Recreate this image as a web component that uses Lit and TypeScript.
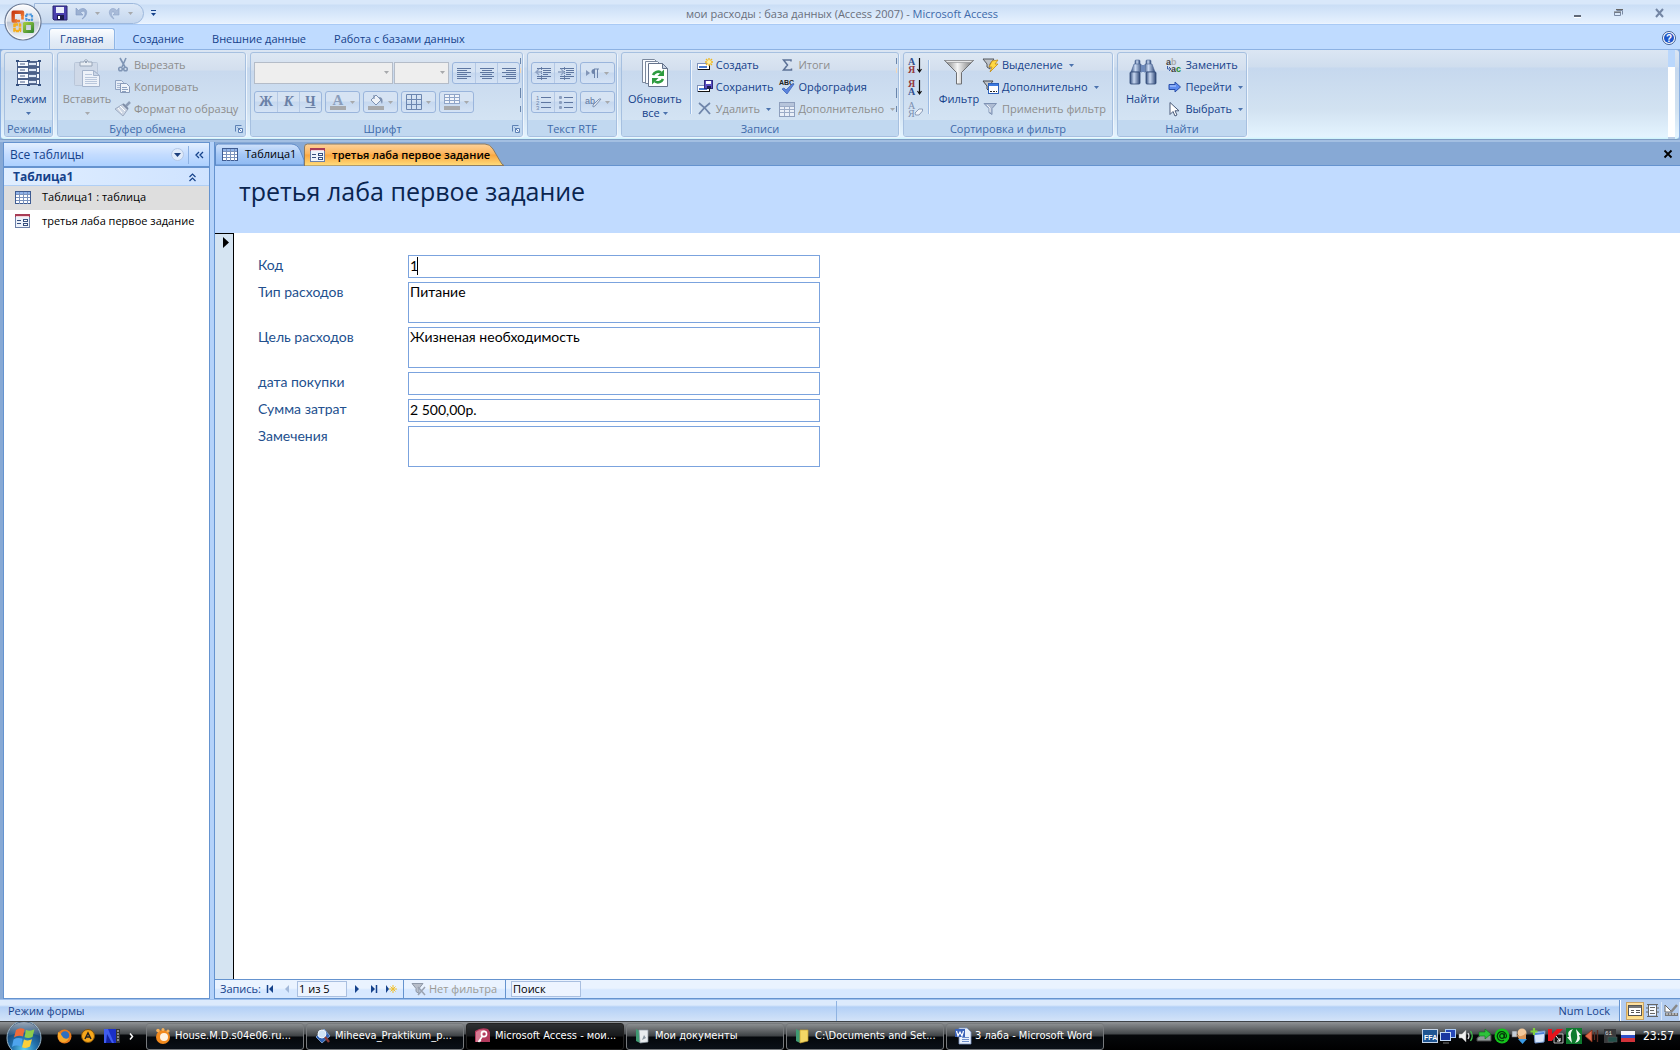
import { LitElement, html, svg, css, nothing } from "lit";
import { customElement, property, state } from "lit/decorators.js";
import { classMap } from "lit/directives/class-map.js";

type Art = ReturnType<typeof svg>;

/** Wraps a drawing in an inline SVG of the given size. */
const icon = (w: number, h: number, art: Art) =>
  html`<svg class="ic" width=${w} height=${h} viewBox="0 0 ${w} ${h}" aria-hidden="true">${art}</svg>`;

const arrow = (color = "#4b72ad") =>
  icon(5, 3, svg`<path d="M0 0h5L2.5 3z" fill=${color} />`);

const GREY = "#a7a9ac";
const MUTE = "#7f95b5";

const lines = (rows: number[][], color: string) =>
  rows.map(([x, y, w]) => svg`<rect x=${x} y=${y} width=${w} height="1" fill=${color} />`);

const art = {
  save: svg`<path d="M0 0h14v14H1L0 13z" fill="#4a3fae"/><path d="M0 0h14v14H1L0 13z" fill="none" stroke="#27256e"/><rect x="3" y="1" width="8" height="6" fill="#e9edfb"/><rect x="4" y="9" width="7" height="5" fill="#1b1a4b"/><rect x="5" y="10" width="2" height="3" fill="#fff"/>`,
  undo: svg`<path d="M1 1v7h7L5.500 5.500C9 2.500 11 5 9.500 9L7 12c5-2 7-10 1-10.500C6 1.500 4.500 2.500 3.500 3.500z" fill="#9cb1d2" stroke="#8199c2" stroke-width=".6"/>`,
  redo: svg`<path d="M11 1v7H5l2.200-2.200C4 3.500 2 6 4.500 9.500L6 12C0 9 0 1.500 5 1.500c1.500 0 3 1 3.800 2z" fill="#a9bbd8" stroke="#8ea4c9" stroke-width=".6"/>`,
  view: svg`${[3.5, 9.5, 15.5, 21.5].map((y) => svg`<rect x="1.500" y=${y - 1} width="22" height="5" fill="#f7faff" stroke="#4a5f88"/><rect x="4" y=${y + 1} width="5" height="1" fill="#4a5f88"/><rect x="12.500" y=${y} width="8" height="3" fill="#dde7f6" stroke="#4a5f88" stroke-width=".9"/>`)}<path d="M1.500 1v26M23.500 1v26M1 2.500h22M1 25.500h22" stroke="#4a5f88"/>${[[0, 1], [11, 1], [22, 1], [0, 25], [11, 25], [22, 25]].map(([x, y]) => svg`<rect x=${x} y=${y} width="3" height="2" fill="#35507f"/>`)}`,
  paste: svg`<rect x=".5" y="3.500" width="23" height="23" rx="1" fill="#cfd9e8" stroke="#b9c6d9"/><path d="M6 7V3h4c0-3 4-3 4 0h4v4z" fill="#e8edf3" stroke="#98a5b8"/><rect x="11" y="2" width="2" height="2" fill="#98a5b8"/><path d="M8.500 11.500h11l6 5v11h-17z" fill="#edf2f9" stroke="#a4b4cc"/><path d="M19.500 11.500v5h6z" fill="#cbd7e8" stroke="#a4b4cc"/>${lines([[11, 15, 7], [11, 18, 12], [11, 20, 12], [11, 22, 12], [11, 24, 12]], "#b9c7dc")}`,
  cut: svg`<path d="M2 0l5 9M8 0L4 9" stroke=${MUTE} stroke-width="1.600" fill="none"/><circle cx="2.500" cy="11" r="1.800" fill="none" stroke=${MUTE} stroke-width="1.500"/><circle cx="7.500" cy="11" r="1.800" fill="none" stroke=${MUTE} stroke-width="1.500"/>`,
  copy: svg`<path d="M.5.500h6l2 2v7h-8z" fill="#e6edf7" stroke="#8fa3c2"/>${lines([[2, 3, 4], [2, 5, 4], [2, 7, 4]], "#a9b9d2")}<path d="M5.500 3.500h6l3 3v6h-9z" fill="#eef3fa" stroke="#8799b8"/>${lines([[7, 7, 5], [7, 9, 6], [7, 11, 4]], "#8da1c0")}`,
  brush: svg`<path d="M15 0l-4 4" stroke="#8d9db7" stroke-width="2.500"/><path d="M8 2l5 5-5 7-8-7z" fill="#cdd6e4" stroke="#9dabc2"/><path d="M8 2l5 5" stroke="#7d8ca5" stroke-width="1.800"/><path d="M3 6l4 5M5 4l5 5" stroke="#fff"/>`,
  launcher: svg`<path d="M.5 6.500v-6h6" stroke="#5d81b5" fill="none"/><path d="M3.500 3.500h4v4h-4z" fill="#eef5ff" stroke="#5d81b5"/><path d="M2.500 2.500l4 4" stroke="#5d81b5"/>`,
  alignL: svg`${lines([[0, 0, 14], [0, 2, 10], [0, 4, 14], [0, 6, 10], [0, 8, 14], [0, 10, 10]], "#5e76a0")}`,
  alignC: svg`${lines([[0, 0, 14], [2, 2, 10], [0, 4, 14], [2, 6, 10], [0, 8, 14], [2, 10, 10]], "#5e76a0")}`,
  alignR: svg`${lines([[0, 0, 14], [4, 2, 10], [0, 4, 14], [4, 6, 10], [0, 8, 14], [4, 10, 10]], "#5e76a0")}`,
  fontColor: svg`<text x="8" y="11" text-anchor="middle" font-family="Liberation Serif, serif" font-weight="bold" font-size="15" fill="#8a9dbb">А</text><rect y="12" width="16" height="4" fill=${GREY}/>`,
  bucket: svg`<path d="M3 6l5-5 5 5-5 5z" fill="#eef2f8" stroke="#7d91b1"/><path d="M6 5V1" stroke="#7d91b1" stroke-width="1.200"/><path d="M11 3c4 0 4 4 3 7l-2-4z" fill="#7d91b1"/><rect y="12" width="16" height="4" fill=${GREY}/>`,
  grid: svg`<path d="M.5.500h15v15H.5zM5.500.500v15M10.500.500v15M.5 5.500h15M.5 10.500h15" fill="none" stroke="#6c86b0"/>`,
  altRow: svg`<rect x=".5" y=".5" width="15" height="9" fill="#f1f5fb" stroke="#8fa5c8"/><path d="M.5 3.500h15M.5 6.500h15M5.500.500v9M10.500.500v9" stroke="#8fa5c8"/><rect y="12" width="16" height="4" fill=${GREY}/>`,
  outdent: svg`${lines([[2, 1, 14], [8, 3, 8], [8, 5, 8], [8, 7, 5], [2, 9, 14], [2, 11, 10]], "#5e76a0")}<path d="M7 5H1l3-3M1 5l3 3" fill="none" stroke="#8fa3c4" stroke-width="1.400"/><path d="M6.500 0v13" stroke="#7085ab" stroke-dasharray="1 1"/>`,
  indent: svg`${lines([[2, 1, 14], [8, 3, 8], [8, 5, 8], [8, 7, 5], [2, 9, 14], [2, 11, 10]], "#5e76a0")}<path d="M0 5h6L3 2M6 5L3 8" fill="none" stroke="#8fa3c4" stroke-width="1.400"/><path d="M6.500 0v13" stroke="#7085ab" stroke-dasharray="1 1"/>`,
  rtl: svg`<path d="M0 2l4 3-4 3z" fill="#8296b8"/><path d="M8.500 1v9M11.500 1v9M13 1H8" stroke="#6d84ab" fill="none"/><path d="M8 1a2.500 2.500 0 0 0 0 5z" fill="#6d84ab"/>`,
  numbered: svg`${lines([[5, 2, 10], [5, 7, 10], [5, 12, 10]], "#5e76a0")}${[1, 2, 3].map((n) => svg`<text x="0" y=${n * 5 - 0.5} font-family="Liberation Sans, sans-serif" font-size="6" fill="#6d84ab">${n}</text>`)}`,
  bulleted: svg`${lines([[5, 2, 9], [5, 7, 9], [5, 12, 9]], "#5e76a0")}${[1, 6, 11].map((y) => svg`<rect x="0" y=${y} width="3" height="3" rx="1" fill="#8a9ebf"/>`)}`,
  highlight: svg`<text x="0" y="8" font-family="Liberation Sans, sans-serif" font-size="9" fill="#5e76a0">ab</text><path d="M16 3l-6 7-2 1 0-2 6-6z" fill="#dfe6f0" stroke="#8094b5"/>`,
  refresh: svg`<path d="M.5.500h12l3 3v20h-15z" fill="#fafcff" stroke="#7b889c"/><path d="M3.500 2.500h12l3 3v19h-15z" fill="#fafcff" stroke="#7b889c"/><path d="M6.500 4.500h14l5 5v18h-19z" fill="#fff" stroke="#66748c"/><path d="M20.500 4.500v5h5z" fill="#c7d3e5" stroke="#66748c"/><path d="M11 16a5.500 5.500 0 0 1 8-2.500" fill="none" stroke="#2e9b3f" stroke-width="2.600"/><path d="M22 10.500v6.500h-6.500z" fill="#2e9b3f"/><path d="M21 20a5.500 5.500 0 0 1-8 2.500" fill="none" stroke="#2e9b3f" stroke-width="2.600"/><path d="M10 25.500v-6.500h6.500z" fill="#2e9b3f"/>`,
  create: svg`<rect x=".5" y="5.500" width="12" height="6" fill="#fff" stroke="#7f93bb"/><rect x="2" y="8" width="8" height="2" fill="#4a7bd0"/><path d="M1 11.500h12M12.500 7v5" stroke="#111"/><path d="M12 0v8M8 4h8M9 1l6 6M15 1l-6 6" stroke="#f0b81e" stroke-width="1.300"/><circle cx="12" cy="4" r="2" fill="#fff3a8"/>`,
  saveRec: svg`<rect x=".5" y="5.500" width="12" height="6" fill="#fff" stroke="#7f93bb"/><rect x="2" y="8" width="8" height="2" fill="#4a7bd0"/><path d="M1 11.500h12M12.500 7v5" stroke="#111"/><rect x="7.500" y=".5" width="8" height="8" fill="#5a4fc0" stroke="#2f2a80"/><rect x="9" y="1" width="5" height="3" fill="#fff"/><rect x="10" y="6" width="4" height="3" fill="#1d1b50"/>`,
  remove: svg`<path d="M1 1c4 3 8 7 11 11M12 1C8 4 4 8 1 12" fill="none" stroke="#7086ab" stroke-width="1.800"/>`,
  sigma: svg`<path d="M9 2.500V1H1.500L5.500 6l-4 5H9.500V9.500" fill="none" stroke="#5c7196" stroke-width="1.500"/>`,
  spell: svg`<text x="0" y="5" font-family="Liberation Sans, sans-serif" font-weight="bold" font-size="7" fill="#222">ABC</text><path d="M3 9l2-1 2 2 6-6 2 0-7 10z" fill="#5b83dc" stroke="#3f66bd" stroke-width=".8"/>`,
  sheet: svg`<rect x=".5" y=".5" width="15" height="14" fill="#e9eff8" stroke="#8e9fbd"/><rect x="1" y="1" width="14" height="3" fill="#b7c5db"/><path d="M1 4.500h14M1 7.500h14M1 10.500h14M5.500 4v10M10.500 4v10" stroke="#9cacc7"/>`,
  sortAsc: svg`<text x="0" y="7" font-family="Liberation Serif, serif" font-weight="bold" font-size="10" fill="#31508f">А</text><text x="0" y="15" font-family="Liberation Serif, serif" font-weight="bold" font-size="10" fill="#93393e">Я</text><path d="M11.500 0v13M9.500 11l2 3 2-3" fill="none" stroke="#111" stroke-width="1.200"/>`,
  sortDesc: svg`<text x="0" y="7" font-family="Liberation Serif, serif" font-weight="bold" font-size="10" fill="#93393e">Я</text><text x="0" y="15" font-family="Liberation Serif, serif" font-weight="bold" font-size="10" fill="#31508f">А</text><path d="M11.500 0v13M9.500 11l2 3 2-3" fill="none" stroke="#111" stroke-width="1.200"/>`,
  sortClear: svg`<text x="0" y="7" font-family="Liberation Serif, serif" font-size="10" fill="#7c8fb0">А</text><text x="0" y="15" font-family="Liberation Serif, serif" font-size="10" fill="#7c8fb0">Я</text><path d="M7 11l4-4h3.500v2L11 13H7.500z" fill="#eef2f8" stroke="#8b9cb8"/>`,
  funnelBig: svg`<defs><linearGradient id="fb"><stop offset="0" stop-color="#777"/><stop offset=".45" stop-color="#f5f5f5"/><stop offset="1" stop-color="#6f6f6f"/></linearGradient></defs><path d="M.5 1.500h29l-12 12v11.500h-5V13.500z" fill="url(#fb)" stroke="#6e7073"/><path d="M1 1.500h28l-2 2H3z" fill="#e8e8e8" stroke="#8a8c8f" stroke-width=".6"/>`,
  selection: svg`<path d="M0 1h11L7 6v5L4 9V6z" fill="#bfc3c8" stroke="#55595f"/><path d="M9 3l6-1-3 4h3l-8 8 2-5H6z" fill="#ffd843" stroke="#c38a12" stroke-width=".8"/>`,
  advanced: svg`<path d="M0 1h10L6 6v5L4 9V6z" fill="#bfc3c8" stroke="#44484e"/><rect x="5.500" y="3.500" width="10" height="10" fill="#fff" stroke="#2b5fb8"/><rect x="6" y="4" width="9" height="2" fill="#3e7be0"/><path d="M7 11.500h2M10 11.500h2M13 11.500h1" stroke="#222"/>`,
  applyFilter: svg`<path d="M1 1.500h12.500L9 6.500v6L6 10.500v-4z" fill="#aebcd3" stroke="#7e92b3"/><path d="M4 3l3 3v4" stroke="#f3f6fb" fill="none"/>`,
  noFilter: svg`<path d="M0 1.500h11L7 6.500v5L4 9.500v-3z" fill="#b8bec9" stroke="#8e98a8"/><path d="M6 5l7 8M13 5l-7 8" stroke="#9aa2b0" stroke-width="1.500"/>`,
  binoculars: svg`<defs><linearGradient id="bn"><stop offset="0" stop-color="#35507f"/><stop offset=".4" stop-color="#c9d9f2"/><stop offset="1" stop-color="#2d4675"/></linearGradient></defs><rect x="6" y="1" width="5" height="5" rx="1" fill="url(#bn)" stroke="#4b6596" stroke-width=".6"/><rect x="17" y="1" width="5" height="5" rx="1" fill="url(#bn)" stroke="#4b6596" stroke-width=".6"/><path d="M5 5h7l1 8H2z" fill="url(#bn)" stroke="#4b6596" stroke-width=".6"/><path d="M16 5h7l3 8H15z" fill="url(#bn)" stroke="#4b6596" stroke-width=".6"/><rect x="12" y="6" width="4" height="7" fill="#6d89ba"/><rect x="1" y="13" width="10" height="12" rx="1" fill="url(#bn)" stroke="#2d4675" stroke-width=".8"/><rect x="17" y="13" width="10" height="12" rx="1" fill="url(#bn)" stroke="#2d4675" stroke-width=".8"/>`,
  replace: svg`<text x="0" y="7" font-family="Liberation Sans, sans-serif" font-weight="bold" font-size="9" fill="#444">a<tspan fill="#aaa">b</tspan></text><text x="5" y="14" font-family="Liberation Sans, sans-serif" font-weight="bold" font-size="9" fill="#444">a<tspan fill="#1c8a2c">c</tspan></text><path d="M1.500 8v3h3M3 9l2 2-2 2" fill="none" stroke="#3a5ea8"/>`,
  goTo: svg`<path d="M1 3.500h6V1l5.500 5L7 11V8.500H1z" fill="#5e8cf0" stroke="#2a4ea8"/><path d="M2 5h6" stroke="#b8cffb"/>`,
  cursor: svg`<path d="M1 .5v12l3-3 2 4.500 2-1-2-4.200h4z" fill="#fff" stroke="#4a5a78"/>`,
  table: svg`<rect x=".5" y=".5" width="15" height="12" fill="#fff" stroke="#3f5c92"/><rect x="1" y="1" width="14" height="3" fill="#8fb2e8"/><path d="M1 3.500h14M1 6.500h14M1 9.500h14M4.500 1v12M8.500 1v12M12.500 1v12" stroke="#7b93bd"/>`,
  form: svg`<rect x=".5" y=".5" width="14" height="13" fill="#eef3fb" stroke="#6d80a8"/><rect x="0" y="0" width="15" height="3" fill="#a83c56"/><rect x="1" y="2" width="13" height="1" fill="#f6d5dc"/>${lines([[2, 6, 4], [2, 9, 4]], "#38507f")}<rect x="8.500" y="5.500" width="4" height="2" fill="#fff" stroke="#38507f"/><rect x="8.500" y="9.500" width="4" height="2" fill="#fff" stroke="#38507f"/>`,
  viewForm: svg`<rect x=".5" y="1.500" width="13" height="10" fill="#fff" stroke="#555"/><rect x="1" y="2" width="12" height="2" fill="#777"/>${lines([[3, 6, 3], [3, 8, 3], [8, 6, 4], [8, 8, 4]], "#555")}`,
  viewLayout: svg`<path d="M1 .5h11M1 12.500h11M2.500 0v13M10.500 0v13" stroke="#666"/><rect x="3" y="2" width="7" height="9" fill="#f6f9fd"/>${lines([[4, 3, 5], [4, 6, 4], [4, 9, 5]], "#666")}<path d="M0 4h2M0 8h2M11 4h2M11 8h2" stroke="#666"/>`,
  viewDesign: svg`<path d="M1 1v7h7z" fill="#fff" stroke="#666"/><path d="M13 1L7 8" stroke="#888" stroke-width="2.500"/><rect x="1" y="9" width="13" height="3" fill="#777"/><path d="M3 9v2M6 9v2M9 9v2M12 9v2" stroke="#eee"/>`,
};

const officeLogo = html`<svg width="40" height="40" viewBox="0 0 40 40" aria-hidden="true">
  <defs>
    <linearGradient id="ob" x2="0" y2="1"><stop offset="0" stop-color="#fdfdfe" /><stop offset=".48" stop-color="#dbe0e9" /><stop offset=".5" stop-color="#bcc5d4" /><stop offset="1" stop-color="#f4f7fb" /></linearGradient>
    <linearGradient id="o1" x2="1" y2="1"><stop offset="0" stop-color="#c93a12" /><stop offset="1" stop-color="#f28a3c" /></linearGradient>
    <linearGradient id="o2" x2="1" y2="1"><stop offset="0" stop-color="#9ac83c" /><stop offset="1" stop-color="#3b8a34" /></linearGradient>
  </defs>
  <circle cx="20" cy="20" r="18" fill="url(#ob)" stroke="#6d7c96" stroke-width="1.200" />
  <circle cx="20" cy="20" r="16.800" fill="none" stroke="#fff" opacity=".8" />
  <g fill="none" stroke-linejoin="round">
    <path d="M14 19H10.200V10.200H19.500V14" stroke="url(#o1)" stroke-width="3.400" />
    <path d="M19.500 13v4.500M13 19h4" stroke="#f07b2a" stroke-width="2.600" />
    <path d="M23 12.500h6v5.500h-5.500z" stroke="#4a96dc" stroke-width="2.200" stroke-dasharray="2.500 .8" />
    <path d="M11.500 22.500h5.500v6.500h-5.500z" stroke="#f5ae1e" stroke-width="2.600" stroke-dasharray="3.500 .8" />
    <path d="M21.500 21.500h8v8h-8z" stroke="url(#o2)" stroke-width="3.200" />
  </g>
</svg>`;

const winOrb = html`<svg width="36" height="29" viewBox="0 0 36 29" aria-hidden="true">
  <defs>
    <radialGradient id="wo" cx=".5" cy=".85" r=".8"><stop offset="0" stop-color="#5fd0f0" /><stop offset=".45" stop-color="#2372ae" /><stop offset="1" stop-color="#0e2c52" /></radialGradient>
    <linearGradient id="wg" x2="0" y2="1"><stop offset="0" stop-color="#fff" stop-opacity=".6" /><stop offset="1" stop-color="#fff" stop-opacity=".05" /></linearGradient>
  </defs>
  <circle cx="18" cy="16" r="17" fill="url(#wo)" stroke="#9db9cc" />
  <path d="M2 14a16 14 0 0 1 32 0q-16-7-32 0z" fill="url(#wg)" />
  <path d="M10 8q4-3 8.500-.8L17 14.500q-5-2-9 1z" fill="#ee6a3a" />
  <path d="M20 7.800q4 2 8.500-.5L26.500 15q-4 2-8 .3z" fill="#8ccc4c" />
  <path d="M7.500 17.500q4-2.500 9-.8L15 24.500q-5-2-9 .5z" fill="#4ea4ee" />
  <path d="M18 17.500q4 2 8-.2L24 24.500q-4 2.500-8 .8z" fill="#fdcf3a" />
</svg>`;

const tray: Art[] = [
  svg`<rect x=".5" y="1.500" width="15" height="13" fill="#1f5592" stroke="#c4d4e8"/><text x="2" y="12" font-family="Liberation Sans, sans-serif" font-weight="bold" font-size="7" fill="#fff">FFA</text>`,
  svg`<rect x="5.500" y="1.500" width="10" height="8" fill="#2446b8" stroke="#a9c9f5"/><rect x=".5" y="4.500" width="10" height="8" fill="#1b36a0" stroke="#c6dbf8"/><path d="M3 15h6" stroke="#555" stroke-width="1.500"/>`,
  svg`<path d="M1 6h3l4-4v12l-4-4H1z" fill="#f1f1f1" stroke="#999" stroke-width=".5"/><path d="M10 5q2 3 0 6" fill="none" stroke="#ddd" stroke-width="1.300"/><path d="M12.500 3q3.500 5 0 10" fill="none" stroke="#3fc04a" stroke-width="1.300"/>`,
  svg`<path d="M1 10l4-3h10v6H1z" fill="#8f9a9a" stroke="#444"/><path d="M3 4h6V1l6 5-6 5V8H3z" fill="#2ec23c" stroke="#0c7418" stroke-width=".6"/>`,
  svg`<circle cx="8" cy="8" r="7.500" fill="#14c31b"/><circle cx="8" cy="8" r="2.300" fill="none" stroke="#04380a" stroke-width="1.300"/><path d="M10.300 5.500V9.500q2 1 2.200-1.500A4.600 4.600 0 1 0 10 12.300" fill="none" stroke="#04380a" stroke-width="1.200"/>`,
  svg`<rect x="0" y="3" width="5" height="6" fill="#c3ccd6" stroke="#666" stroke-width=".6"/><circle cx="10" cy="5" r="4.500" fill="#f1c79a"/><path d="M4 6q5 5 10-1v6H7z" fill="#d9965a"/><path d="M6 11h9l-4.500 5z" fill="#3a9be6"/>`,
  svg`<path d="M4 4l11-1-1 11-9 1z" fill="#d6e6fb" stroke="#6f92c9"/><path d="M5 5l9-1v2l-9 1z" fill="#4a82dc"/><path d="M4 0v7M.5 3.500h7" stroke="#7fd03c" stroke-width="2.200"/>`,
  svg`<path d="M6 6h9v9H6z" fill="#111" stroke="#ddd" stroke-width=".8"/><path d="M0 1h4v5l5-5h6L6 10l-2 3H0z" fill="#e8131b"/><path d="M8 8l4 5M12 10v3H9" stroke="#fff" fill="none"/>`,
  svg`<rect width="16" height="16" fill="#0e7a2e"/><path d="M7 1Q0 3 3 9L1 9l5 6-1-6q-1-4 2-8zM9 15q7-2 4-8l2 0-5-6 1 6q1 4-2 8z" fill="#f3f8f3"/>`,
  svg`<path d="M1 8l7-6v12z" fill="#e0694a" stroke="#7c2c18" stroke-width=".8"/><path d="M10.500 4v8M13.500 2v12" stroke="#5c2c22" stroke-width="1.300"/>`,
  svg`<path d="M2 1h12v10l-3 4H2z" fill="#3a3b3d"/><rect x="6" y="9" width="9" height="5" fill="#23504a" stroke="#555" stroke-width=".6"/><text x="3" y="7" font-family="Liberation Mono, monospace" font-size="6" fill="#ddd">61</text>`,
  svg`<rect x="1" y="3" width="14" height="4" fill="#f5f5f8"/><rect x="1" y="7" width="14" height="3" fill="#2f4fc8"/><rect x="1" y="10" width="14" height="4" fill="#d2323a"/>`,
];

const taskIcons: Record<string, Art> = {
  media: svg`<circle cx="8" cy="9" r="7" fill="#f28a1e"/><circle cx="9" cy="9" r="4" fill="#fff3e2"/><circle cx="3" cy="2.500" r="1.800" fill="#f7b25a"/><circle cx="8" cy="1.500" r="1.500" fill="#f7b25a"/><circle cx="13" cy="3" r="1.600" fill="#f7b25a"/>`,
  reader: svg`<path d="M1 9l8-8 6 7-8 7z" fill="#2f62b4" stroke="#9dbce8" stroke-width=".7"/><circle cx="7" cy="6" r="4" fill="#cfe3f5" stroke="#eef5fc"/><path d="M10 9l4 5" stroke="#8b3a34" stroke-width="2.400"/>`,
  access: svg`<path d="M0 3q6-4 13-2l2 3v10H0z" fill="#b23a5c"/><path d="M1 4q4-3 9-2l-6 12H1z" fill="#d77a92"/><circle cx="9" cy="6" r="2.600" fill="none" stroke="#fff" stroke-width="1.600"/><path d="M7.500 8L3.500 14M4 12l2 1" stroke="#fff" stroke-width="1.600"/>`,
  docs: svg`<path d="M1 1l4 2v12l-4-2z" fill="#3f9a72"/><path d="M4 2h9v12l-8 1z" fill="#e8ecef" stroke="#8d9aa4" stroke-width=".7"/><path d="M7 12l2-5 2 3z" fill="#8b98a3"/>`,
  folder: svg`<path d="M1 1l4 2v12l-4-2z" fill="#3f9a72"/><path d="M5 2h8v11l-8 2z" fill="#f4d766" stroke="#c7a12e" stroke-width=".7"/>`,
  word: svg`<path d="M4 0h8l4 4v12H4z" fill="#eaf1fb" stroke="#7892c2" stroke-width=".8"/>${lines([[7, 9, 7], [7, 11, 7], [7, 13, 7]], "#6f8fcb")}<rect y="1" width="10" height="8" fill="#3a62b8"/><path d="M1.500 3l1.500 5 2-4 2 4 1.500-5" fill="none" stroke="#fff" stroke-width="1.200"/>`,
};

const base = css`
  * { box-sizing: border-box; }
  .ic { display: block; flex: none; overflow: visible; }
  button, input, textarea, select { font: inherit; color: inherit; margin: 0; }
  button { background: none; border: 0; padding: 0; cursor: default; display: flex; align-items: center; white-space: nowrap; }
`;

/** A titled section of the ribbon. */
@customElement("ribbon-group")
export class RibbonGroup extends LitElement {
  @property() label = "";
  @property({ type: Boolean }) launcher = false;
  @property({ type: Boolean }) notch = false;

  static styles = [base, css`
    :host {
      display: flex; flex-direction: column; flex: none; position: relative; height: 85px;
      border: 1px solid #a6c0e0; border-radius: 3px; overflow: hidden;
      box-shadow: 1px 1px 0 #eef5fd;
      background: linear-gradient(#dde7f3 0, #d3dfee 17px, #c8d9ee 18px, #d3e3f3 66px);
    }
    .body { flex: 1; display: flex; padding: 1px 3px 0; }
    .cap { height: 16px; display: flex; align-items: center; background: #c1d8f0; color: #3e6aaa; padding: 1px 2px 0; }
    .name { flex: 1; text-align: center; white-space: nowrap; }
    .notch { position: absolute; right: 1px; top: 5px; bottom: 2px; width: 1px;
      background: linear-gradient(#6b86ab 0 6px, transparent 6px 10px, #f3d7b5 10px 15px, transparent 15px 30px, #6b86ab 30px 40px, transparent 40px 48px, #6b86ab 48px 54px, transparent 54px); }
  `];

  render() {
    return html`
      <div class="body"><slot></slot></div>
      <div class="cap">
        <span class="name">${this.label}</span>
        ${this.launcher ? html`<button aria-label="Параметры: ${this.label}">${icon(8, 8, art.launcher)}</button>` : nothing}
      </div>
      ${this.notch ? html`<span class="notch"></span>` : nothing}`;
  }
}

interface Field { id: string; label: string; value: string; tall?: boolean; active?: boolean }
interface Task { icon: string; text: string; active?: boolean }

@customElement("app-root")
export class AppRoot extends LitElement {
  @state() private fields: Field[] = [
    { id: "code", label: "Код", value: "1", active: true },
    { id: "type", label: "Тип расходов", value: "Питание", tall: true },
    { id: "goal", label: "Цель расходов", value: "Жизненая необходимость", tall: true },
    { id: "date", label: "дата покупки", value: "" },
    { id: "sum", label: "Сумма затрат", value: "2 500,00р." },
    { id: "notes", label: "Замечения", value: "", tall: true },
  ];

  private tasks: Task[] = [
    { icon: "media", text: "House.M.D.s04e06.ru..." },
    { icon: "reader", text: "Miheeva_Praktikum_p..." },
    { icon: "access", text: "Microsoft Access - мои...", active: true },
    { icon: "docs", text: "Мои документы" },
    { icon: "folder", text: "C:\\Documents and Set..." },
    { icon: "word", text: "3 лаба - Microsoft Word" },
  ];

  static styles = [base, css`
    :host { display: block; font: 11px/16px "Open Sans", "Noto Sans", sans-serif; color: #15428b; }
    .app { display: flex; flex-direction: column; min-height: 100vh; position: relative; background: #87a9d5; }

    .title { height: 25px; display: flex; align-items: center; padding: 2px 16px 0 34px; border-bottom: 1px solid #a9caf5;
      background: linear-gradient(#d9e8fa 0 4px, #cadef6 5px, #e6f1fe 23px, #f3f8ff); }
    .office { position: absolute; left: 3px; top: 2px; width: 40px; height: 40px; border-radius: 50%; }
    .qat { display: flex; align-items: center; height: 21px; width: 110px; padding-left: 18px; border: 1px solid #9db8dc; border-radius: 0 11px 11px 0;
      background: linear-gradient(#dce8f7, #c5d7ee); gap: 8px; }
    .more { margin-left: 7px; }
    .caption { flex: 1; text-align: center; color: #696f7c; white-space: nowrap; padding: 2px 46px 0 0; }
    .caption b { font-weight: normal; color: #3e6aaa; }
    .win { display: flex; gap: 32px; }

    .tabs { height: 24px; display: flex; align-items: flex-end; background: #bfdbff; padding: 0 4px 0 49px; }
    .tab { height: 21px; padding: 0 10px; border-radius: 3px 3px 0 0; margin-right: 8px; }
    .tab.on { background: linear-gradient(#fbfdff, #e3ecf7 60%, #dce6f2); border: 1px solid #8fb6e6; border-bottom: 0; box-shadow: 0 0 2px #e8f4ff; }
    .help { margin: 0 0 4px auto; }

    .ribbon { height: 91px; display: flex; gap: 4px; padding: 2px 0 0 3px; border: 1px solid #8db2e3; border-bottom-color: #7f9dc4; border-radius: 4px;
      background: linear-gradient(#dbe6f3 0, #cfddee 17px, #c6d8ee 18px, #d2e2f1 60px, #e4f4ff 87px, #c8f4fb 89px); }
    .strip { width: 7px; margin: -2px 4px 0 auto; background: linear-gradient(#bad7fc 0 17px, #fff 17px 87px, #b9cde6 87px); }
    .shade { height: 2px; background: #a3bfe2; }

    .col { display: flex; flex-direction: column; }
    .cmd { height: 22px; gap: 3px; color: #15428b; }
    .cmd .box { width: 16px; display: flex; justify-content: center; }
    .cmd > .ic { margin-left: 3px; }
    .cmd.off { color: #8d8d8d; }
    .cmd.big { flex-direction: column; align-items: center; height: 66px; padding-top: 5px; gap: 0; }
    .big .pic { height: 32px; display: flex; align-items: flex-start; }
    .big .txt { height: 16px; }
    .big .low { display: flex; align-items: center; gap: 3px; height: 12px; }
    .sep { width: 2px; margin: 6px 5px; background: #9cbbe3; border-right: 1px solid #f0f6fd; }

    .g-views { width: 49px; } .g-clip { width: 189px; } .g-font { width: 273px; } .g-rtf { width: 90px; }
    .g-rec { width: 278px; } .g-sort { width: 210px; } .g-find { width: 130px; }
    .g-views .big { flex: 1; }
    .g-clip .big { width: 52px; margin-right: 2px; }
    .g-rec .big { width: 60px; } .g-sort .big { width: 48px; } .g-find .big { width: 44px; margin-right: 2px; }
    .w-mid { width: 83px; }

    .tools { flex: 1; display: flex; flex-direction: column; gap: 7px; padding: 8px 0 0; }
    .line { display: flex; gap: 3px; }
    .combo { appearance: none; height: 22px; border: 1px solid #b4bcc8; background: #eee; border-radius: 0; padding: 0; opacity: 1; }
    .cwrap { display: flex; position: relative; }
    .cwrap .ic { position: absolute; right: 4px; top: 9px; }
    .face { width: 139px; } .size { width: 55px; }
    .cwrap + .cwrap { margin-left: -2px; }
    .seg { display: flex; height: 22px; border: 1px solid #9ab5dc; border-radius: 3px; background: linear-gradient(#d6e3f3 45%, #c6d8ef 50%, #d5e3f5); }
    .seg button { justify-content: center; width: 22px; gap: 4px; }
    .seg button + button { border-left: 1px solid #b5c9e5; }
    .seg .wide { width: 33px; }
    .seg.tri button { width: 22px; }
    .glyph { font: bold 14px/16px "Liberation Serif", serif; color: #6a80a6; }
    .glyph.i { font-style: italic; } .glyph.u { text-decoration: underline; }

    .work { flex: 1; display: flex; }
    .nav { width: 207px; display: flex; flex-direction: column; border: 1px solid #6593cf; margin-left: 3px; background: #fff; }
    .nhead { height: 25px; display: flex; align-items: center; padding: 0 6px; font-size: 12px; border-bottom: 2px solid #6593cf;
      background: linear-gradient(#e3efff, #c4dcff 50%, #add1ff); }
    .nhead span { flex: 1; }
    .drop { width: 13px; height: 13px; border-radius: 50%; justify-content: center; background: #dfeafa; border: 1px solid #b4c8e6; }
    .coll { margin-left: 4px; padding-left: 6px; border-left: 1px solid #8db2e3; height: 18px; }
    .ngroup { height: 18px; justify-content: space-between; padding: 0 13px 0 9px; font-weight: bold; font-size: 12px;
      background: linear-gradient(90deg, #e0eeff, #cfe3ff); border-bottom: 1px solid #b0cff5; width: 100%; }
    .item { height: 24px; padding: 0 0 2px 11px; gap: 11px; color: #000; width: 100%; text-align: left; }
    .item .box { width: 16px; }
    .item.on { background: #dedede; }
    .split { width: 5px; background: #b4d2fa; border-right: 1px solid #6593cf; }

    .doc { flex: 1; display: flex; flex-direction: column; min-width: 0; }
    .dtabs { height: 24px; display: flex; align-items: flex-end; border-bottom: 1px solid #6593cf; padding-right: 8px; color: #000; }
    .dtab { position: relative; height: 22px; display: flex; align-items: center; padding-left: 7px; }
    .dtab .shape { position: absolute; inset: 0; width: 100%; height: 100%; }
    .dtab button { position: relative; gap: 7px; }
    .dt1 { width: 89px; } .dt2 { width: 200px; font-weight: 600; height: 23px; margin-bottom: -1px; padding-left: 6px; }
    .close { margin: 0 0 7px auto; }
    .fhead { height: 67px; background: #c1dbff; padding: 7px 24px; font-size: 25px; line-height: 36px; color: #0a2550; margin: 0; font-weight: normal; }
    .fbody { flex: 1; display: flex; background: #fff; }
    .sel { width: 19px; background: #d5e4f2; border: solid #000; border-width: 1px 1px 0 0; padding: 3px 0 0 8px; }
    .form { display: grid; grid-template-columns: 150px minmax(200px, 412px); flex: 1; gap: 4px 0; align-content: start; padding: 22px 24px;
      font: 14px/18px "Lato", "Open Sans", sans-serif; }
    .form label { color: #23508e; padding-top: 1px; }
    .cell { position: relative; display: flex; }
    .cell input, .cell textarea { width: 100%; height: 23px; border: 1px solid #7ba3de; padding: 0 1px 3px; color: #000; background: #fff; border-radius: 0; resize: none; outline: none; display: block; overflow: hidden; }
    .cell textarea { height: 41px; }
    .caret { position: absolute; left: 9px; top: 2px; width: 1px; height: 18px; background: #000; }

    .recs { height: 20px; display: flex; align-items: center; border: solid #6593cf; border-width: 1px 0; padding-left: 5px; background: linear-gradient(#eaf3ff 45%, #d7e8ff 55%); }
    .recs input { height: 16px; border: 1px solid #a9bfe0; background: #edf4ff; color: #000; padding: 0 1px; outline: none; }
    .rbtn { width: 17px; justify-content: center; }
    .pos { width: 50px; margin: 0 1px 0 2px; }
    .nof { height: 18px; border: solid #6593cf; border-width: 0 1px; padding: 0 8px; gap: 4px; margin-left: 4px; color: #9b9a94; }
    .find { width: 70px; margin-left: 5px; }

    .status { height: 22px; display: flex; align-items: center; border-top: 1px solid #9fc0ec; background: linear-gradient(#dceafc 0 5px, #b3d0f6 7px, #d3e3f8); padding-left: 8px; }
    .sp { flex: 1; height: 20px; line-height: 20px; border-right: 1px solid #8fb3e2; }
    .sp + .sp { border: 0; flex: 0 1 722px; }
    .views { display: flex; height: 21px; align-items: center; border-left: 1px solid #6593cf; box-shadow: inset 1px 0 #fff; padding-left: 6px; margin-left: 9px; background: #b4cdf0; }
    .views button { width: 18px; height: 18px; justify-content: center; border-right: 1px solid #dbe8f8; }
    .views .on { background: linear-gradient(#fde3a6, #fbc45c 60%, #fde59a); border: 1px solid #c9a468; }

    .task { height: 29px; display: flex; align-items: center; border-top: 1px solid #3f4347; padding-left: 6px; color: #fff;
      font: 11px/16px "DejaVu Sans Condensed", "DejaVu Sans", sans-serif; background: linear-gradient(#8f9295, #44484b 12px, #06080b 13px, #000); }
    .quick { display: flex; align-items: center; gap: 9px; width: 104px; padding-left: 15px; }
    .tb { height: 27px; padding: 0 8px; gap: 4px; border: 1px solid #777a7d; border-radius: 3px; margin-right: 2px; flex: 0 1 158px; overflow: hidden;
      background: linear-gradient(#8b8e90, #3e4245 12px, #05080c 13px, #0b1017); }
    .tb.on { background: linear-gradient(#2e3032, #16181a 12px, #000 13px); border-color: #222; }
    .tray { margin-left: auto; display: flex; gap: 2px; padding-right: 6px; align-items: center; }
    .clock { margin-left: 5px; font-size: 12px; }
  `];

  private cmd(a: Art, label: string, o: { off?: boolean; drop?: boolean; w?: number; h?: number } = {}) {
    return html`<button class=${classMap({ cmd: true, off: !!o.off })}>
      <span class="box">${icon(o.w ?? 16, o.h ?? 14, a)}</span>${label}${o.drop ? arrow(o.off && label !== "Удалить" ? GREY : undefined) : nothing}
    </button>`;
  }

  private big(a: Art, w: number, h: number, label: string, low: unknown = nothing, off = false) {
    return html`<button class=${classMap({ big: true, cmd: true, off })}>
      <span class="pic">${icon(w, h, a)}</span><span class="txt">${label}</span><span class="low">${low}</span>
    </button>`;
  }

  private tool(a: Art, label: string, w: number, h: number, drop = false) {
    return html`<button class=${drop ? "wide" : ""} aria-label=${label}>${icon(w, h, a)}${drop ? arrow(GREY) : nothing}</button>`;
  }

  private renderRibbon() {
    return html`
      <div class="ribbon">
        <ribbon-group class="g-views" label="Режимы">${this.big(art.view, 25, 28, "Режим", arrow())}</ribbon-group>
        <ribbon-group class="g-clip" label="Буфер обмена" launcher>
          ${this.big(art.paste, 26, 28, "Вставить", arrow(GREY), true)}
          <div class="col">
            ${this.cmd(art.cut, "Вырезать", { off: true, w: 10 })}
            ${this.cmd(art.copy, "Копировать", { off: true })}
            ${this.cmd(art.brush, "Формат по образцу", { off: true })}
          </div>
        </ribbon-group>
        <ribbon-group class="g-font" label="Шрифт" launcher notch>
          <div class="tools">
            <div class="line">
              <span class="cwrap"><select class="combo face" aria-label="Шрифт" disabled></select>${arrow(GREY)}</span>
              <span class="cwrap"><select class="combo size" aria-label="Размер шрифта" disabled></select>${arrow(GREY)}</span>
              <span class="seg tri">${this.tool(art.alignL, "По левому краю", 14, 11)}${this.tool(art.alignC, "По центру", 14, 11)}${this.tool(art.alignR, "По правому краю", 14, 11)}</span>
            </div>
            <div class="line">
              <span class="seg tri"><button class="glyph">Ж</button><button class="glyph i">К</button><button class="glyph u">Ч</button></span>
              <span class="seg">${this.tool(art.fontColor, "Цвет текста", 16, 16, true)}</span>
              <span class="seg">${this.tool(art.bucket, "Цвет заливки", 16, 16, true)}</span>
              <span class="seg">${this.tool(art.grid, "Сетка", 16, 16, true)}</span>
              <span class="seg">${this.tool(art.altRow, "Цвет строк", 16, 16, true)}</span>
            </div>
          </div>
        </ribbon-group>
        <ribbon-group class="g-rtf" label="Текст RTF">
          <div class="tools">
            <div class="line">
              <span class="seg">${this.tool(art.outdent, "Уменьшить отступ", 16, 13)}${this.tool(art.indent, "Увеличить отступ", 16, 13)}</span>
              <span class="seg">${this.tool(art.rtl, "Направление", 14, 11, true)}</span>
            </div>
            <div class="line">
              <span class="seg">${this.tool(art.numbered, "Нумерация", 15, 15)}${this.tool(art.bulleted, "Маркеры", 14, 15)}</span>
              <span class="seg">${this.tool(art.highlight, "Выделение текста", 16, 12, true)}</span>
            </div>
          </div>
        </ribbon-group>
        <ribbon-group class="g-rec" label="Записи" notch>
          ${this.big(art.refresh, 26, 28, "Обновить", html`все${arrow()}`)}
          <span class="sep"></span>
          <div class="col w-mid">
            ${this.cmd(art.create, "Создать")}
            ${this.cmd(art.saveRec, "Сохранить")}
            ${this.cmd(art.remove, "Удалить", { off: true, drop: true, w: 13 })}
          </div>
          <div class="col">
            ${this.cmd(art.sigma, "Итоги", { off: true, w: 11, h: 12 })}
            ${this.cmd(art.spell, "Орфография")}
            ${this.cmd(art.sheet, "Дополнительно", { off: true, drop: true, h: 15 })}
          </div>
        </ribbon-group>
        <ribbon-group class="g-sort" label="Сортировка и фильтр">
          <div class="col">
            <button class="cmd" aria-label="По возрастанию"><span class="box">${icon(14, 15, art.sortAsc)}</span></button>
            <button class="cmd" aria-label="По убыванию"><span class="box">${icon(14, 15, art.sortDesc)}</span></button>
            <button class="cmd" aria-label="Очистить сортировку"><span class="box">${icon(14, 15, art.sortClear)}</span></button>
          </div>
          <span class="sep"></span>
          ${this.big(art.funnelBig, 30, 27, "Фильтр")}
          <div class="col">
            ${this.cmd(art.selection, "Выделение", { drop: true })}
            ${this.cmd(art.advanced, "Дополнительно", { drop: true })}
            ${this.cmd(art.applyFilter, "Применить фильтр", { off: true })}
          </div>
        </ribbon-group>
        <ribbon-group class="g-find" label="Найти">
          ${this.big(art.binoculars, 28, 26, "Найти")}
          <div class="col">
            ${this.cmd(art.replace, "Заменить")}
            ${this.cmd(art.goTo, "Перейти", { drop: true, w: 13, h: 12 })}
            ${this.cmd(art.cursor, "Выбрать", { drop: true, w: 10 })}
          </div>
        </ribbon-group>
        <span class="strip"></span>
      </div>`;
  }

  private renderNav() {
    return html`
      <nav class="nav">
        <div class="nhead">
          <span>Все таблицы</span>
          <button class="drop" aria-label="Категории">${icon(7, 4, svg`<path d="M0 0h7L3.500 4z" fill="#1d3f7d"/>`)}</button>
          <button class="coll" aria-label="Свернуть">${icon(8, 8, svg`<path d="M4 1L1 4l3 3M8 1L5 4l3 3" fill="none" stroke="#15428b" stroke-width="1.300"/>`)}</button>
        </div>
        <button class="ngroup">Таблица1 ${icon(7, 8, svg`<path d="M.5 4l3-3 3 3M.5 8l3-3 3 3" fill="none" stroke="#15428b" stroke-width="1.200"/>`)}</button>
        <button class="item on"><span class="box">${icon(16, 13, art.table)}</span>Таблица1 : таблица</button>
        <button class="item"><span class="box">${icon(15, 14, art.form)}</span>третья лаба первое задание</button>
      </nav>`;
  }

  private renderField(f: Field) {
    return html`
      <label for=${f.id}>${f.label}</label>
      <div class="cell">
        ${f.tall
          ? html`<textarea id=${f.id} .value=${f.value}></textarea>`
          : html`<input id=${f.id} type="text" .value=${f.value} />`}
        ${f.active ? html`<span class="caret"></span>` : nothing}
      </div>`;
  }

  private rec(label: string, w: number, a: Art) {
    return html`<button class="rbtn" aria-label=${label}>${icon(w, 8, a)}</button>`;
  }

  private renderDoc() {
    return html`
      <main class="doc">
        <div class="dtabs">
          <div class="dtab dt1">
            <svg class="shape" viewBox="0 0 90 22" preserveAspectRatio="none" aria-hidden="true">
              <defs><linearGradient id="t1" x2="0" y2="1"><stop offset="0" stop-color="#d0e2fb" /><stop offset=".5" stop-color="#a6c8f5" /><stop offset="1" stop-color="#8fbaf3" /></linearGradient></defs>
              <path d="M.5 22V4q0-3 3-3H77q6 0 9 6l4 10V22z" fill="url(#t1)" stroke="#5f8bc9" />
            </svg>
            <button>${icon(16, 13, art.table)}Таблица1</button>
          </div>
          <div class="dtab dt2">
            <svg class="shape" viewBox="0 0 200 23" preserveAspectRatio="none" aria-hidden="true">
              <defs><linearGradient id="t2" x2="0" y2="1"><stop offset="0" stop-color="#fdd29a" /><stop offset=".45" stop-color="#fcb55c" /><stop offset=".5" stop-color="#fba63f" /><stop offset="1" stop-color="#ffdf7e" /></linearGradient></defs>
              <path d="M.5 23V4q0-3 3-3H181q5 0 8 5l7 12q2 4 4 4.500z" fill="url(#t2)" stroke="#8a7a62" />
            </svg>
            <button>${icon(15, 14, art.form)}третья лаба первое задание</button>
          </div>
          <button class="close" aria-label="Закрыть">${icon(8, 8, svg`<path d="M.5.500l7 7M7.500.500l-7 7" stroke="#000" stroke-width="1.800"/>`)}</button>
        </div>
        <h1 class="fhead">третья лаба первое задание</h1>
        <div class="fbody">
          <div class="sel">${icon(6, 11, svg`<path d="M0 0l6 5.500L0 11z" fill="#000"/>`)}</div>
          <form class="form">${this.fields.map((f) => this.renderField(f))}</form>
        </div>
        <div class="recs">
          <label for="pos">Запись:</label>
          ${this.rec("Первая запись", 6, svg`<path d="M.5 0v8" stroke="#15428b" stroke-width="1.500"/><path d="M6 0v8L2 4z" fill="#15428b"/>`)}
          ${this.rec("Предыдущая запись", 4, svg`<path d="M4 0v8L0 4z" fill="#a3b9da"/>`)}
          <input id="pos" class="pos" .value=${"1 из 5"} />
          ${this.rec("Следующая запись", 4, svg`<path d="M0 0v8l4-4z" fill="#15428b"/>`)}
          ${this.rec("Последняя запись", 6, svg`<path d="M0 0v8l4-4z" fill="#15428b"/><path d="M5.500 0v8" stroke="#15428b" stroke-width="1.500"/>`)}
          ${this.rec("Новая запись", 10, svg`<path d="M0 0v8l3-4z" fill="#15428b"/><path d="M7 0v8M3 4h8M4.500 1.500l5 5M9.500 1.500l-5 5" stroke="#f0bf2c"/>`)}
          <button class="nof">${icon(13, 14, art.noFilter)}Нет фильтра</button>
          <input class="find" aria-label="Поиск" .value=${"Поиск"} />
        </div>
      </main>`;
  }

  render() {
    return html`
      <div class="app">
        <header class="title">
          <div class="qat">
            <button aria-label="Сохранить">${icon(14, 14, art.save)}</button>
            <button aria-label="Отменить">${icon(12, 13, art.undo)}</button>${arrow(GREY)}
            <button aria-label="Вернуть">${icon(12, 13, art.redo)}</button>${arrow(GREY)}
          </div>
          <button class="more" aria-label="Настройка панели">${icon(5, 6, svg`<rect width="5" height="1" fill="#15428b"/><path d="M0 3h5L2.500 6z" fill="#15428b"/>`)}</button>
          <div class="caption">мои расходы : база данных (Access 2007) - <b>Microsoft Access</b></div>
          <div class="win">
            <button aria-label="Свернуть">${icon(8, 10, svg`<rect y="7" width="7" height="2" fill="#5f6878"/><rect y="9" width="7" height="1" fill="#fff"/>`)}</button>
            <button aria-label="Восстановить">${icon(9, 8, svg`<path d="M2.500 1.500h6v4M.5 3.500h6v3h-6z" fill="none" stroke="#7b8aa4"/><path d="M2 .5h7M0 3h7" stroke="#666"/>`)}</button>
            <button aria-label="Закрыть">${icon(9, 8, svg`<path d="M1 0l7 8M8 0L1 8" stroke="#7486a4" stroke-width="2"/>`)}</button>
          </div>
        </header>
        <nav class="tabs">
          <button class="tab on">Главная</button>
          <button class="tab">Создание</button>
          <button class="tab">Внешние данные</button>
          <button class="tab">Работа с базами данных</button>
          <button class="help" aria-label="Справка">${icon(14, 14, svg`<circle cx="7" cy="7" r="6.500" fill="#fff" stroke="#3f5f95"/><circle cx="7" cy="7" r="5" fill="#1f56c9"/><text x="7" y="11" text-anchor="middle" font-family="Liberation Sans, sans-serif" font-weight="bold" font-size="10" fill="#fff">?</text>`)}</button>
        </nav>
        <button class="office" aria-label="Кнопка Office">${officeLogo}</button>
        ${this.renderRibbon()}
        <div class="shade"></div>
        <div class="work">${this.renderNav()}<div class="split"></div>${this.renderDoc()}</div>
        <footer class="status">
          <span class="sp">Режим формы</span><span class="sp"></span><span>Num Lock</span>
          <div class="views">
            <button class="on" aria-label="Режим формы">${icon(14, 13, art.viewForm)}</button>
            <button aria-label="Режим макета">${icon(13, 13, art.viewLayout)}</button>
            <button aria-label="Конструктор">${icon(14, 13, art.viewDesign)}</button>
          </div>
        </footer>
        <footer class="task">
          <button aria-label="Пуск">${winOrb}</button>
          <div class="quick">
            <button aria-label="Firefox">${icon(15, 15, svg`<circle cx="7.500" cy="7.500" r="7" fill="#e87a1c"/><circle cx="8" cy="6.500" r="4.200" fill="#2e6fc2"/><path d="M1 3q3 1 4 4 2 4 7 2-2 5-7 4T1 3z" fill="#f6a92c"/>`)}</button>
            <button aria-label="Плеер">${icon(14, 14, svg`<circle cx="7" cy="7" r="6.500" fill="#f7a71b" stroke="#7a4e08"/><path d="M4 10l3-6 3 6M5 8h4" stroke="#222" stroke-width="1.500" fill="none"/>`)}</button>
            <button aria-label="Видео">${icon(16, 14, svg`<rect width="12" height="14" fill="#1a2fc8"/><path d="M0 0h4l6 14H0z" fill="#3f5cf0"/><path d="M2 14l1-9 5 9z" fill="#1222a0"/><rect x="12" width="4" height="14" fill="#333"/><path d="M13 2h2M13 5h2M13 8h2M13 11h2" stroke="#ddd"/>`)}</button>
            <button aria-label="Ещё">${icon(5, 7, svg`<path d="M1 .5l2.500 3L1 6.500" stroke="#fff" stroke-width="1.500" fill="none"/>`)}</button>
          </div>
          ${this.tasks.map((t) => html`<button class=${classMap({ tb: true, on: !!t.active })}>${icon(16, 16, taskIcons[t.icon])}${t.text}</button>`)}
          <div class="tray">${tray.map((t) => icon(16, 16, t))}<span class="clock">23:57</span></div>
        </footer>
      </div>`;
  }
}
